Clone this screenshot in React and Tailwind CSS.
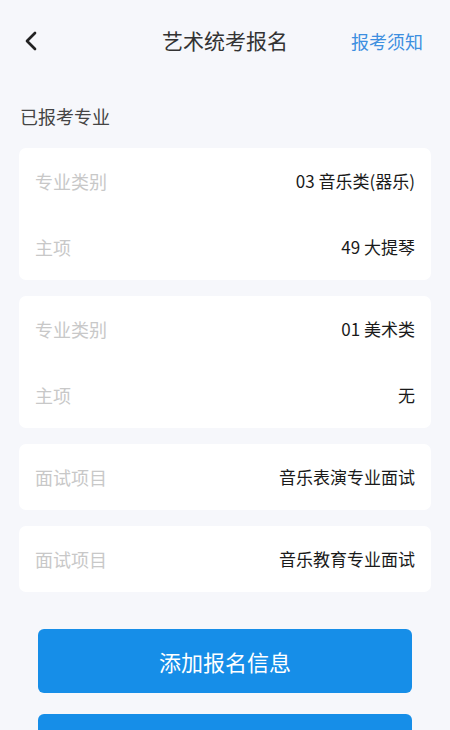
import { ChevronLeft } from "lucide-react";

const groups = [
  [
    { label: "专业类别", value: "03 音乐类(器乐)" },
    { label: "主项", value: "49 大提琴" },
  ],
  [
    { label: "专业类别", value: "01 美术类" },
    { label: "主项", value: "无" },
  ],
  [{ label: "面试项目", value: "音乐表演专业面试" }],
  [{ label: "面试项目", value: "音乐教育专业面试" }],
];

export default function App() {
  return (
    <div
      className="w-[450px] h-[730px] overflow-hidden bg-[#f6f7fb]"
      style={{ fontFamily: '"Noto Sans CJK SC", "Noto Sans", sans-serif' }}
    >
      {/* 顶部导航 */}
      <header className="h-[82px] flex items-center justify-between px-[20px] relative">
        <ChevronLeft size={32} strokeWidth={2} className="text-[#222] -ml-[5px]" />
        <h1 className="absolute left-1/2 -translate-x-1/2 text-[21px] text-[#333]">
          艺术统考报名
        </h1>
        <span className="text-[18px] text-[#3d8fe0] mr-[7px]">报考须知</span>
      </header>

      <p className="px-[20px] pt-[20px] pb-[18px] text-[18px] leading-[28px] text-[#444]">
        已报考专业
      </p>

      <div className="px-[19px] flex flex-col gap-[16px]">
        {groups.map((rows, i) => (
          <div key={i} className="bg-white rounded-[7px]">
            {rows.map((r, j) => (
              <div
                key={j}
                className="flex items-center justify-between px-[16px] h-[66px]"
              >
                <span className="text-[18px] text-[#c8c8c8]">{r.label}</span>
                <span className="text-[17px] text-[#1a1a1a]">{r.value}</span>
              </div>
            ))}
          </div>
        ))}
      </div>

      <div className="px-[38px] pt-[37px] flex flex-col gap-[21px]">
        <button className="h-[64px] rounded-[6px] bg-[#168ee8] text-white text-[22px]">
          添加报名信息
        </button>
        <button className="h-[64px] rounded-[6px] bg-[#168ee8] text-white text-[22px]" />
      </div>
    </div>
  );
}
